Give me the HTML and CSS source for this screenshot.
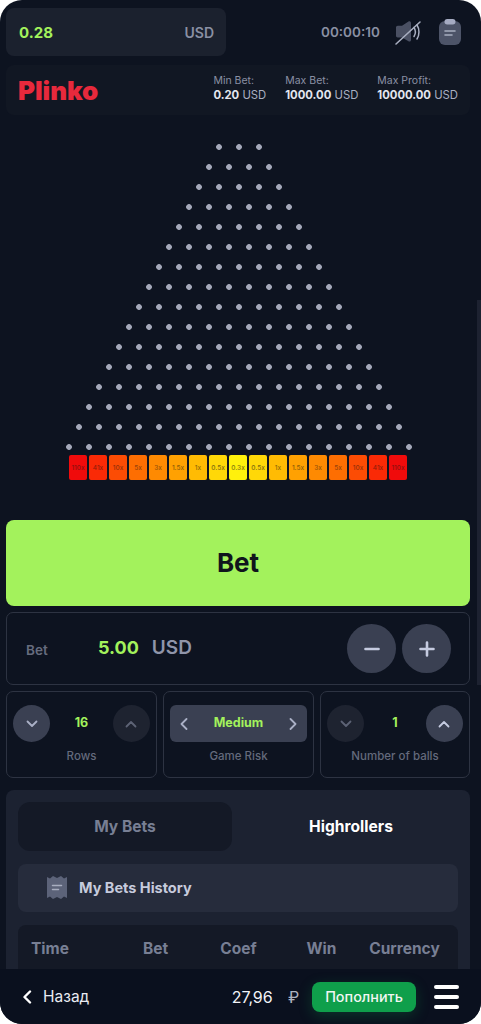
FILE: index.html
```html
<!DOCTYPE html>
<html lang="en">
<head>
  <meta charset="UTF-8" />
  <meta name="viewport" content="width=device-width, initial-scale=1" />
  <title>Plinko</title>
  <link rel="stylesheet" href="styles.css">
</head>
<body>

<div class="screen">
  <main class="game">

    <header class="top-bar">
      <div class="balance">
        <span class="balance-value">0.28</span>
        <span class="balance-currency">USD</span>
      </div>
      <span class="timer">00:00:10</span>
      <svg class="icon-sound" width="30" height="30" viewBox="0 0 30 30">
        <path d="M2 10.500c0-1 .8-1.700 1.700-1.700H8l6.500-4.300c1-.6 2.500.1 2.500 1.400v17c0 1.300-1.500 2-2.500 1.400L8 20.500H3.700c-.9 0-1.700-.8-1.700-1.700z" fill="#4a5063"/>
        <path d="M20 10.500c1.700 2.700 1.700 6.300 0 9M23 8c2.600 4 2.600 10 0 14" fill="none" stroke="#a8aec0" stroke-width="1.500" stroke-linecap="round"/>
        <path d="M2 27L26 5" stroke="#a8aec0" stroke-width="1.600" stroke-linecap="round"/>
      </svg>
      <svg class="icon-clip" width="22" height="26" viewBox="0 0 22 26">
        <rect x="0" y="2" width="22" height="24" rx="6" fill="#4d5468"/>
        <rect x="5.500" y="0" width="11" height="5.500" rx="2.700" fill="#a5abc2"/>
        <path d="M6 12h10M6 16h7" stroke="#a8aec0" stroke-width="1.600" stroke-linecap="round"/>
      </svg>
    </header>

    <section class="info-bar">
      <h1 class="logo">Plinko</h1>
      <div class="limits">
        <div class="limit"><span class="limit-label">Min Bet:</span><span class="limit-value"><b>0.20</b> USD</span></div>
        <div class="limit"><span class="limit-label">Max Bet:</span><span class="limit-value"><b>1000.00</b> USD</span></div>
        <div class="limit"><span class="limit-label">Max Profit:</span><span class="limit-value"><b>10000.00</b> USD</span></div>
      </div>
    </section>

    <section class="board">
      <div class="pegs">
        <div class="peg-row" style="width:60px"></div>
        <div class="peg-row" style="width:80px"></div>
        <div class="peg-row" style="width:100px"></div>
        <div class="peg-row" style="width:120px"></div>
        <div class="peg-row" style="width:140px"></div>
        <div class="peg-row" style="width:160px"></div>
        <div class="peg-row" style="width:180px"></div>
        <div class="peg-row" style="width:200px"></div>
        <div class="peg-row" style="width:220px"></div>
        <div class="peg-row" style="width:240px"></div>
        <div class="peg-row" style="width:260px"></div>
        <div class="peg-row" style="width:280px"></div>
        <div class="peg-row" style="width:300px"></div>
        <div class="peg-row" style="width:320px"></div>
        <div class="peg-row" style="width:340px"></div>
        <div class="peg-row" style="width:360px"></div>
      </div>
      <div class="slots">
        <span class="slot s0">110x</span>
        <span class="slot s1">41x</span>
        <span class="slot s2">10x</span>
        <span class="slot s3">5x</span>
        <span class="slot s4">3x</span>
        <span class="slot s5">1.5x</span>
        <span class="slot s6">1x</span>
        <span class="slot s7">0.5x</span>
        <span class="slot s8">0.3x</span>
        <span class="slot s7">0.5x</span>
        <span class="slot s6">1x</span>
        <span class="slot s5">1.5x</span>
        <span class="slot s4">3x</span>
        <span class="slot s3">5x</span>
        <span class="slot s2">10x</span>
        <span class="slot s1">41x</span>
        <span class="slot s0">110x</span>
      </div>
    </section>

    <button class="bet-btn">Bet</button>

    <section class="bet-panel">
      <span class="bet-label">Bet</span>
      <span class="bet-value">5.00</span>
      <span class="bet-currency">USD</span>
      <div class="bet-steps">
        <button class="round-btn big">
          <svg width="16" height="16" viewBox="0 0 16 16"><path d="M1.500 8h13" stroke="#c5cbe0" stroke-width="2.600" stroke-linecap="round"/></svg>
        </button>
        <button class="round-btn big">
          <svg width="16" height="16" viewBox="0 0 16 16"><path d="M1.500 8h13M8 1.500v13" stroke="#c5cbe0" stroke-width="2.600" stroke-linecap="round"/></svg>
        </button>
      </div>
    </section>

    <section class="options">
      <div class="option">
        <div class="option-control">
          <button class="round-btn">
            <svg width="12" height="8" viewBox="0 0 12 8"><path d="M1.500 1.500L6 6l4.500-4.500" fill="none" stroke="#aab0c6" stroke-width="1.800" stroke-linecap="round" stroke-linejoin="round"/></svg>
          </button>
          <span class="option-value">16</span>
          <button class="round-btn off">
            <svg width="12" height="8" viewBox="0 0 12 8"><path d="M1.500 6.500L6 2l4.500 4.500" fill="none" stroke="#5d6375" stroke-width="1.800" stroke-linecap="round" stroke-linejoin="round"/></svg>
          </button>
        </div>
        <span class="option-label">Rows</span>
      </div>
      <div class="option">
        <div class="option-control risk">
          <svg width="8" height="12" viewBox="0 0 8 12"><path d="M6.500 1L1.500 6l5 5" fill="none" stroke="#aab0c6" stroke-width="1.800" stroke-linecap="round" stroke-linejoin="round"/></svg>
          <span class="option-value">Medium</span>
          <svg width="8" height="12" viewBox="0 0 8 12"><path d="M1.500 1l5 5-5 5" fill="none" stroke="#aab0c6" stroke-width="1.800" stroke-linecap="round" stroke-linejoin="round"/></svg>
        </div>
        <span class="option-label">Game Risk</span>
      </div>
      <div class="option">
        <div class="option-control">
          <button class="round-btn off">
            <svg width="12" height="8" viewBox="0 0 12 8"><path d="M1.500 1.500L6 6l4.500-4.500" fill="none" stroke="#5d6375" stroke-width="1.800" stroke-linecap="round" stroke-linejoin="round"/></svg>
          </button>
          <span class="option-value">1</span>
          <button class="round-btn">
            <svg width="12" height="8" viewBox="0 0 12 8"><path d="M1.500 6.500L6 2l4.500 4.500" fill="none" stroke="#c5cbe0" stroke-width="1.800" stroke-linecap="round" stroke-linejoin="round"/></svg>
          </button>
        </div>
        <span class="option-label">Number of balls</span>
      </div>
    </section>

    <section class="history">
      <div class="tabs">
        <button class="tab active">My Bets</button>
        <button class="tab">Highrollers</button>
      </div>
      <div class="history-title">
        <svg width="22" height="25" viewBox="0 0 22 25">
          <path d="M1 2l3 1.500L7 1l4 2 4-2 3 2.500L21 2v21l-3-1.500L15 24l-4-2-4 2-3-2.500L1 23z" fill="#5c6379"/>
          <path d="M6.500 10.500h9M6.500 14.500h6" stroke="#a8aec0" stroke-width="1.500" stroke-linecap="round"/>
        </svg>
        <span>My Bets History</span>
      </div>
      <div class="history-table">
        <span class="col-time">Time</span>
        <span>Bet</span>
        <span>Coef</span>
        <span>Win</span>
        <span>Currency</span>
      </div>
    </section>
  </main>

  <div class="scroll-thumb"></div>

  <nav class="bottom-nav">
    <a class="back" href="#">
      <svg width="10" height="14" viewBox="0 0 10 14"><path d="M8 1.500L2.500 7 8 12.500" fill="none" stroke="#fff" stroke-width="2.400" stroke-linecap="round" stroke-linejoin="round"/></svg>
      <span>Назад</span>
    </a>
    <span class="wallet">27,96 <em>₽</em></span>
    <button class="deposit">Пополнить</button>
    <div class="burger"><i></i><i></i><i></i></div>
  </nav>
</div>

</body>
</html>
```

FILE: styles.css
```css
* {
  box-sizing: border-box;
}

html, body {
  margin: 0;
  padding: 0;
  height: 100%;
  background: #fff;
}

body {
  font-family: 'Inter', sans-serif;
  color: white;
  overflow: hidden;
}

button {
  font-family: inherit;
  border: none;
  cursor: pointer;
  padding: 0;
}

.screen {
  position: relative;
  width: 481px;
  height: 1024px;
  background: #0d1320;
  border-radius: 22px;
  overflow: hidden;
  display: flex;
  flex-direction: column;
}

.game {
  flex: 1;
  min-height: 0;
  overflow: hidden;
  padding: 8px 11px 0 6px;
}

.scroll-thumb {
  position: absolute;
  right: 0;
  top: 300px;
  width: 4px;
  height: 385px;
  background: #1d2231;
}

/* top row */
.top-bar {
  display: flex;
  align-items: center;
  height: 48px;
}

.balance {
  width: 220px;
  height: 48px;
  background: #1b212e;
  border-radius: 8px;
  padding: 0 12px 0 13px;
  display: flex;
  align-items: center;
  justify-content: space-between;
  font-size: 14px;
  font-weight: 600;
}

.balance-value {
  color: #a3f25c;
  font-size: 15px;
  font-weight: 700;
}

.balance-currency {
  color: #8a90a3;
}

.timer {
  margin-left: 95px;
  color: #8a90a3;
  font-size: 13.500px;
  font-weight: 600;
}

.icon-sound {
  margin-left: 14px;
}

.icon-clip {
  margin-left: 15px;
}

/* title row */
.info-bar {
  margin-top: 9px;
  height: 50px;
  width: 464px;
  background: #111723;
  border-radius: 8px;
  padding: 0 12px;
  display: flex;
  align-items: center;
  justify-content: space-between;
}

.logo {
  margin: 0;
  color: #e7293c;
  font-size: 26px;
  font-weight: 900;
  letter-spacing: -0.1px;
}

.limits {
  display: flex;
  gap: 19px;
  padding-bottom: 4px;
}

.limit {
  display: flex;
  flex-direction: column;
  font-size: 10.500px;
  line-height: 14px;
  color: #8a90a3;
}

.limit-value {
  font-size: 11.300px;
  color: #a9afc1;
  white-space: nowrap;
}

.limit-value b {
  color: #e4e7f0;
  font-weight: 700;
}

/* board */
.board {
  height: 405px;
  width: 464px;
  padding-top: 22px;
  display: flex;
  flex-direction: column;
  align-items: center;
}

.pegs {
  margin-left: 2px;
  display: flex;
  flex-direction: column;
  align-items: center;
}

.peg-row {
  height: 20px;
  background: radial-gradient(circle at center, #a4a9ba 2.500px, transparent 3.200px) 0 0 / 20px 20px repeat-x;
}

.slots {
  margin-top: -2px;
  display: flex;
  gap: 2px;
}

.slot {
  width: 18px;
  height: 25px;
  border-radius: 2px;
  display: flex;
  align-items: center;
  justify-content: center;
  font-size: 6.500px;
  font-weight: 500;
  white-space: nowrap;
}

.s0 { background: #f00b0b; color: #8f1010; }
.s1 { background: #fa2a06; color: #921d0a; }
.s2 { background: #fc4c04; color: #96300a; }
.s3 { background: #fd6e02; color: #98420a; }
.s4 { background: #fe8a02; color: #985208; }
.s5 { background: #ffa102; color: #8f6008; }
.s6 { background: #ffbb03; color: #8f6c08; }
.s7 { background: #ffd808; color: #7e6c10; }
.s8 { background: #fff10c; color: #7f7a10; }

/* main button */
.bet-btn {
  display: block;
  width: 464px;
  height: 86px;
  padding-bottom: 2px;
  background: #a3f25c;
  border-radius: 8px;
  color: #10151c;
  font-size: 26px;
  font-weight: 700;
}

/* bet amount */
.bet-panel {
  margin-top: 6px;
  width: 464px;
  height: 73px;
  border: 1px solid #2d3342;
  border-radius: 7px;
  padding: 0 18px 0 19px;
  display: flex;
  align-items: center;
}

.bet-label {
  width: 72px;
  color: #666c7e;
  font-size: 13.500px;
  font-weight: 600;
  padding-top: 2px;
}

.bet-value {
  color: #a3f25c;
  font-size: 18px;
  font-weight: 700;
  padding-bottom: 2px;
}

.bet-currency {
  margin-left: 13px;
  color: #8f95aa;
  font-size: 19px;
  font-weight: 600;
  padding-bottom: 2px;
}

.bet-steps {
  margin-left: auto;
  display: flex;
  gap: 6px;
}

.round-btn {
  width: 37px;
  height: 37px;
  border-radius: 50%;
  background: #3a4052;
  display: flex;
  align-items: center;
  justify-content: center;
  flex-shrink: 0;
}

.round-btn.big {
  width: 49px;
  height: 49px;
}

.round-btn.off {
  background: #1e2330;
}

/* rows, risk, balls */
.options {
  margin-top: 6px;
  width: 464px;
  display: grid;
  grid-template-columns: 151px 151px 150px;
  gap: 6px;
}

.option {
  height: 87px;
  border: 1px solid #2d3342;
  border-radius: 7px;
  padding: 13px 6px 0;
  display: flex;
  flex-direction: column;
  align-items: center;
}

.option-control {
  width: 100%;
  display: flex;
  align-items: center;
  justify-content: space-between;
}

.option-control.risk {
  height: 37px;
  background: #3a4052;
  border-radius: 6px;
  padding: 0 10px;
}

.option-value {
  color: #a3f25c;
  font-size: 12.500px;
  font-weight: 700;
  padding-bottom: 2px;
}

.option-label {
  margin-top: 7px;
  color: #646a7c;
  font-size: 11.500px;
  font-weight: 500;
}

/* history block */
.history {
  margin-top: 12px;
  width: 464px;
  height: 240px;
  background: #1c2231;
  border-radius: 8px 8px 0 0;
  padding: 12px 12px 0;
}

.tabs {
  display: flex;
}

.tab {
  width: 214px;
  height: 49px;
  flex-shrink: 0;
  border-radius: 12px;
  background: transparent;
  color: #fff;
  font-size: 15.600px;
  font-weight: 700;
}

.tab + .tab {
  width: 238px;
}

.tab.active {
  background: #141926;
  color: #787f94;
}

.history-title {
  margin-top: 13px;
  height: 48px;
  padding: 0 0 2px 28px;
  background: #262c3c;
  border-radius: 8px;
  display: flex;
  align-items: center;
  gap: 11px;
  color: #c6cbdc;
  font-size: 14.500px;
  font-weight: 700;
}

.history-table {
  margin-top: 13px;
  height: 60px;
  background: #141926;
  border-radius: 8px 8px 0 0;
  padding: 14px 12px 0 13px;
  display: grid;
  grid-template-columns: repeat(5, 83px);
  text-align: center;
  color: #787f94;
  font-size: 15.500px;
  font-weight: 700;
}

.col-time {
  text-align: left;
}

/* bottom bar */
.bottom-nav {
  position: relative;
  flex-shrink: 0;
  height: 55px;
  background: #0a101e;
  padding: 0 22px;
  display: flex;
  align-items: center;
}

.back {
  display: flex;
  align-items: center;
  gap: 11px;
  color: #e9ebf2;
  text-decoration: none;
  font-size: 15.500px;
}

.wallet {
  margin-left: auto;
  color: #f2f3f7;
  font-size: 16px;
  letter-spacing: -0.1px;
}

.wallet em {
  margin-left: 11px;
  font-style: normal;
  color: #aeb3c0;
  font-size: 16px;
}

.deposit {
  margin-left: 13px;
  width: 104px;
  height: 30px;
  background: #0f9f4b;
  border-radius: 8px;
  color: #f2f6f3;
  font-size: 14.400px;
  font-weight: 500;
  box-shadow: 0 4px 14px rgba(15, 159, 75, 0.25);
}

.burger {
  margin-left: 18px;
  width: 25px;
  display: flex;
  flex-direction: column;
  gap: 6px;
}

.burger i {
  display: block;
  height: 4px;
  border-radius: 2px;
  background: #fff;
}
```
